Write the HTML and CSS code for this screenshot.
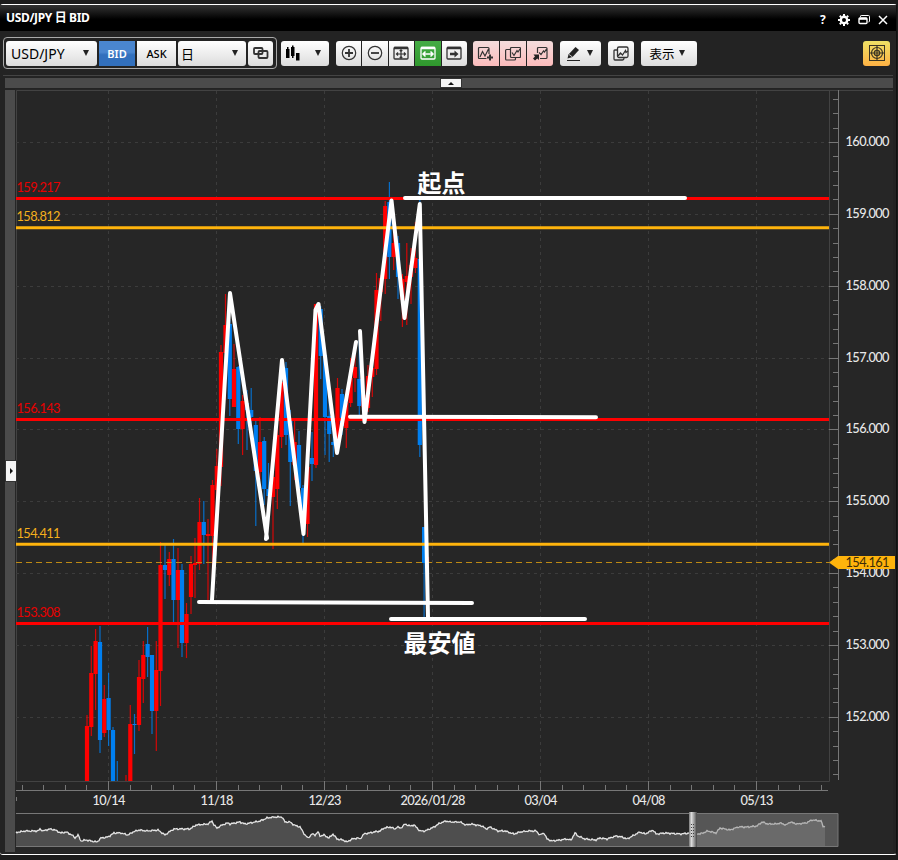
FILE: index.html
```html
<!DOCTYPE html>
<html lang="ja">
<head>
    <meta charset="UTF-8">
    <meta name="viewport" content="width=device-width, initial-scale=1.0">
    <title>USD/JPY 日 BID</title>
    <link rel="stylesheet" href="styles.css">
</head>
<body>
    <div class="window">
        <header class="titlebar">
            <span class="title">USD/JPY 日 BID</span>
            <div class="window-buttons">
                <span class="help">?</span>
                <svg width="12" height="12" viewBox="0 0 12 12"><circle cx="6" cy="6" r="3.2" fill="none" stroke="#fff" stroke-width="2.4"/><path d="M6 0v2M6 10v2M0 6h2M10 6h2M1.8 1.8l1.4 1.4M8.8 8.8l1.4 1.4M1.8 10.2l1.4-1.4M8.8 3.2l1.4-1.4" stroke="#fff" stroke-width="2"/></svg>
                <svg width="12" height="12" viewBox="0 0 12 12" fill="none" stroke="#fff"><path d="M2.5 3V2.2Q2.5 1.5 3.2 1.5H10.5Q11.5 1.5 11.5 2.5V7Q11.5 8 10.5 8"/><rect x="1" y="4" width="8" height="5.5" rx="1" stroke-width="1.4"/><path d="M1 4.8h8" stroke-width="2"/></svg>
                <svg width="10" height="10" viewBox="0 0 10 10"><path d="M1 1l8 8M9 1L1 9" stroke="#fff" stroke-width="1.5"/></svg>
            </div>
        </header>

        <div class="toolbar">
            <div class="symbol-group">
                <button class="btn select symbol">USD/JPY<i class="arrow"></i></button>
                <button class="btn bid">BID</button>
                <button class="btn ask">ASK</button>
                <button class="btn select period">日<i class="arrow"></i></button>
                <button class="btn link"><svg width="16" height="12" viewBox="0 0 16 12" fill="none" stroke="#333" stroke-width="1.8"><rect x="1" y="1" width="8.5" height="6" rx="1"/><rect x="5.5" y="4" width="9" height="7" rx="1"/></svg></button>
            </div>

            <button class="btn chart-type"><svg width="15" height="16" viewBox="0 0 15 16" fill="#000"><path d="M0 4h1V2h1.500v2h1v9H0zM5 2h1V.5h1.500V2h1v9H7.500v2H6V11H5zM10 8h3.500v7.500H10z"/></svg><i class="arrow"></i></button>

            <div class="group zoom-group">
                <button class="btn"><svg width="16" height="16" viewBox="0 0 16 16" fill="none" stroke="#333"><circle cx="8" cy="8" r="6.700" stroke-width="1.2"/><path d="M4 8h8M8 4v8" stroke-width="1.8"/></svg></button>
                <button class="btn"><svg width="16" height="16" viewBox="0 0 16 16" fill="none" stroke="#333"><circle cx="8" cy="8" r="6.700" stroke-width="1.2"/><path d="M4 8h8" stroke-width="1.8"/></svg></button>
                <button class="btn"><svg width="16" height="16" viewBox="0 0 16 16" fill="none" stroke="#333"><rect x="1" y="2.500" width="14" height="11.500" rx="1" stroke-width="1.300"/><path d="M1 3h14" stroke-width="2.500"/><path d="M3.500 9h9M8 5v8M5 7.500L3.500 9 5 10.500M11 7.500L12.500 9 11 10.500M6.700 6L8 4.800 9.300 6M6.700 12L8 13.200 9.300 12" stroke-width="1.200"/></svg></button>
                <button class="btn active"><svg width="16" height="16" viewBox="0 0 16 16" fill="none" stroke="#fff"><rect x="1" y="2.500" width="14" height="11.500" rx="1" stroke-width="1.300"/><path d="M1 3h14" stroke-width="2.500"/><path d="M3 9h10M5.500 6.500L3 9l2.500 2.500M10.500 6.500L13 9l-2.500 2.500" stroke-width="1.500"/></svg></button>
                <button class="btn"><svg width="16" height="16" viewBox="0 0 16 16" fill="none" stroke="#333"><rect x="1" y="2.500" width="14" height="11.500" rx="1" stroke-width="1.300"/><path d="M1 3h14" stroke-width="2.500"/><path d="M4 7.800h4.500V5.500L12.500 9l-4 3.500v-2.300H4z" fill="#333" stroke="none"/></svg></button>
            </div>

            <div class="group pink-group">
                <button class="btn"><svg width="17" height="16" viewBox="0 0 17 16" fill="none" stroke="#333" stroke-width="1.200"><path d="M9.500 13.500H2.500Q1.500 13.500 1.500 12.500V3.500Q1.500 2.500 2.500 2.500H11Q12 2.500 12 3.500V9M3 12L5.500 6.500 8 11 11.500 4"/><path d="M13 9.500v6M10 12.500h6" stroke-width="2"/></svg></button>
                <button class="btn"><svg width="16" height="16" viewBox="0 0 16 16" fill="none" stroke="#333" stroke-width="1.200"><path d="M5 4.500H1.500Q.600 4.500 .600 5.500V14Q.600 15 1.500 15H9.500Q10.500 15 10.500 14V13"/><rect x="5.500" y="2.500" width="10" height="10" rx="1"/><path d="M7 7.500L9 10.500 12 5.500 13 7 15 4"/></svg></button>
                <button class="btn"><svg width="16" height="16" viewBox="0 0 16 16" fill="none" stroke="#333" stroke-width="1.200"><path d="M5.500 8V3.500Q5.500 2.500 6.500 2.500H14Q15 2.500 15 3.500V12.500Q15 13.500 14 13.500H8M7 7.500L9 9.500 11.500 6 12.500 7 14.500 4"/><path d="M1.500 9.500H7V15L5.300 13.500 3 15.500 1 13.500 3 11.500z" fill="#222" stroke="none"/></svg></button>
            </div>

            <button class="btn pencil"><svg width="15" height="15" viewBox="0 0 15 15"><path d="M1.500 12.500L2.500 8.500 9.500 1 13 4 6.500 11z" fill="#222"/><path d="M3 8.500L6.500 11" stroke="#eee" stroke-width=".8"/><path d="M1 14.500h13" stroke="#222"/></svg><i class="arrow"></i></button>
            <button class="btn windows"><svg width="16" height="16" viewBox="0 0 16 16" fill="none" stroke="#333" stroke-width="1.300"><path d="M4 5H1.800Q1 5 1 6V13.800Q1 15 2 15H9.500Q11 15 11 13"/><rect x="4.500" y="2" width="10.500" height="10.500" rx="1.500"/><path d="M5 11L7.500 8 9.500 10 12.500 5.500 13 7.500 15 6"/></svg></button>
            <button class="btn display">表示<i class="arrow"></i></button>

            <button class="btn target"><svg width="16" height="16" viewBox="0 0 16 16" fill="none" stroke="#3a3424"><rect x=".5" y=".5" width="15" height="15"/><circle cx="8" cy="8" r="5.500" stroke-width="1.200"/><circle cx="8" cy="8" r="2.700" stroke-width="1.200"/><path d="M8 1v14M1 8h14" stroke-width="1.200"/></svg></button>
        </div>

        <div class="top-strip"><span class="handle handle-up"></span></div>

        <div class="main">
            <div class="side-strip"><span class="handle handle-right"></span></div>
            <!-- user units are window pixels -->
            <svg class="chart" viewBox="15 89 878 764" width="878" height="764">
                <defs>
                    <clipPath id="plot"><rect x="16" y="91" width="813" height="690"/></clipPath>
                    <linearGradient id="grip"><stop offset="0" stop-color="#777"/><stop offset=".3" stop-color="#ddd"/><stop offset=".65" stop-color="#999"/><stop offset="1" stop-color="#444"/></linearGradient>
                </defs>
                <path class="frame" d="M16.500 781V90.500H893M829.500 91V781.500H16.500"/>
                <g id="grid"></g>
                <g id="axes"></g>
                <g id="candles" clip-path="url(#plot)"></g>

                <g id="levels"></g>
                <path class="current-line" d="M16 562.500H829"/>
                <path class="price-tag" d="M829 562.500L838 556H895V569H838z"/>
                <text class="tag-text" x="845.500" y="566.500" textLength="44">154.161</text>

                <g class="drawing">
                    <path d="M212 600L230 293 267 538M266 539L282 360 303.500 534 315.500 310 318.500 304 337 453 356 342"/>
                    <path d="M360 331L364.500 422 391.500 200.500 404.500 318 419.800 204 428 617"/>
                    <path d="M405 198H685M350 416.800L596 417.200M199 602L472 603M391 619H585"/>
                </g>
                <text class="note" x="417.500" y="192">起点</text>
                <text class="note" x="403.500" y="652">最安値</text>

                <g id="overview"></g>
            </svg>
        </div>
    </div>

    <script src="chart.js"></script>
</body>
</html>
```
FILE: styles.css
```css
* {
    box-sizing: border-box;
}
body {
    margin: 0;
    height: 860px;
    padding-top: 4px;
    background: #1c1c1c;
    overflow: hidden;
    font-family: "Noto Sans", "Noto Sans CJK JP", sans-serif;
}
.window {
    width: 897px;
    height: 851px;
    background: #232323;
    border-top: 1px solid #fff;
    border-bottom: 1px solid #fff;
    border-right: 1px solid #111;
    border-radius: 3px;
    display: flex;
    flex-direction: column;
}
.titlebar {
    height: 26px;
    flex: none;
    display: flex;
    align-items: center;
    justify-content: space-between;
    padding: 0 8px 0 6px;
    background: linear-gradient(#333, #000 55%);
}
.title {
    color: #fff;
    font-size: 12px;
    font-weight: bold;
    letter-spacing: -0.35px;
    white-space: nowrap;
    position: relative;
    top: -1px;
}
.window-buttons {
    display: flex;
    align-items: center;
    gap: 8px;
    padding-top: 3px;
}
.help {
    color: #fff;
    font-size: 12px;
    font-weight: bold;
    line-height: 12px;
    width: 10px;
}
.toolbar {
    height: 44px;
    flex: none;
    display: flex;
    align-items: center;
    padding: 0 6px 0 3px;
}
.symbol-group {
    height: 32px;
    width: 274px;
    display: flex;
    align-items: center;
    gap: 2px;
    padding: 0 2px;
    border: 1px solid #aaa;
    border-radius: 4px;
    margin-right: 4px;
}
.btn {
    height: 25px;
    border: none;
    border-radius: 3px;
    padding: 0;
    flex: none;
    display: flex;
    align-items: center;
    justify-content: center;
    background: linear-gradient(#fff, #dcdcdc);
    color: #000;
    font-family: inherit;
    white-space: nowrap;
}
.arrow {
    border: 3.5px solid transparent;
    border-top: 6px solid #222;
    border-bottom: none;
}
.select {
    justify-content: space-between;
    padding: 0 8px 0 5px;
    font-size: 14px;
    letter-spacing: 0;
}
.symbol {
    width: 91px;
}
.bid {
    width: 36px;
    border-radius: 0;
    background: linear-gradient(#4a86cf 45%, #3270bd 55%);
    color: #fff;
    font-size: 11px;
    font-weight: 600;
}
.ask {
    width: 39px;
    border-radius: 0;
    font-size: 11px;
    font-weight: 500;
}
.period {
    width: 68px;
    padding-left: 3px;
    font-size: 13px;
}
.link {
    width: 25px;
}
.chart-type {
    width: 48px;
    gap: 14px;
    padding-right: 3px;
    margin-right: 7px;
}
.group {
    display: flex;
    gap: 1px;
    margin-right: 7px;
}
.group .btn {
    width: 25.4px;
    border-radius: 0;
}
.group .btn:first-child {
    border-radius: 3px 0 0 3px;
}
.group .btn:last-child {
    border-radius: 0 3px 3px 0;
}
.group .active {
    background: linear-gradient(#45ac45, #2f982d);
}
.zoom-group {
    margin-right: 6px;
}
.pink-group .btn {
    width: 26px;
    background: linear-gradient(#f3dcdc, #fcbcbc);
}
.pencil {
    width: 41px;
    gap: 6px;
    padding-right: 2px;
    margin-right: 7px;
}
.windows {
    width: 26px;
    margin-right: 7px;
}
.display {
    width: 56px;
    gap: 5px;
    padding-right: 3px;
    font-size: 12.5px;
}
.target {
    width: 27px;
    margin-left: auto;
    background: linear-gradient(#eee065, #ffb244);
}
.top-strip {
    flex: none;
    height: 14px;
    margin: 0 3px 0 3px;
    padding: 1px 0 0 6px;
    border-top: 1px solid #444;
    display: flex;
    justify-content: center;
    background: linear-gradient(#4b4b4b, #4b4b4b) 2px 2px / 888px 10px no-repeat;
}
.handle {
    display: flex;
    align-items: center;
    justify-content: center;
    background: #f4f4f4;
    border: 1px solid #333;
}
.handle-up {
    width: 22px;
    height: 10px;
    margin-top: 1px;
}
.handle-up::after {
    content: "";
    border: 3px solid transparent;
    border-bottom-color: #111;
    border-top: none;
}
.main {
    display: flex;
    height: 764px;
}
.side-strip {
    width: 10px;
    height: 762px;
    margin: 1px 0 0 5px;
    background: #4b4b4b;
    display: flex;
    align-items: center;
    position: relative;
    z-index: 1;
}
.handle-right {
    width: 12px;
    height: 22px;
    flex: none;
}
.handle-right::after {
    content: "";
    border: 3px solid transparent;
    border-left-color: #111;
    border-right: none;
}
.chart {
    flex: none;
    display: block;
    background: #262626;
    overflow: visible;
}
.chart text {
    font-family: Lato, sans-serif;
    font-size: 12.8px;
}
.frame {
    fill: none;
    stroke: #424242;
}
.grid-line {
    stroke: #3c3c3c;
    stroke-dasharray: 3 4;
}
.axis {
    fill: none;
    stroke: #777;
}
.chart .axis-text {
    fill: #e8e8e8;
    font-weight: 500;
}
.chart .date-text {
    font-size: 12.8px;
    text-anchor: middle;
}
.up {
    fill: #f00;
}
.down {
    fill: #007ff0;
}
.wick {
    opacity: 0.8;
}
.red-line {
    stroke: #f00;
    stroke-width: 3;
}
.gold-line {
    stroke: #ffb40c;
    stroke-width: 3;
}
.red-text {
    fill: #e60000;
}
.gold-text {
    fill: #f5b01c;
}
.current-line {
    stroke: #bd8a14;
    stroke-dasharray: 6 4;
}
.price-tag {
    fill: #ffb40c;
}
.tag-text {
    fill: #3c2c08;
}
.drawing {
    fill: none;
    stroke: #fff;
    stroke-width: 4;
    stroke-linecap: round;
    stroke-linejoin: round;
}
.chart .note {
    fill: #fff;
    font-family: "Noto Sans CJK JP", sans-serif;
    font-size: 24px;
    font-weight: bold;
}
.ov-area {
    fill: #4e4e4e;
}
.ov-line {
    fill: none;
    stroke: #e4e4e4;
    stroke-width: 1.3;
}
.ov-frame {
    fill: none;
    stroke: #777;
}
.ov-mask {
    fill: #858585;
    fill-opacity: 0.5;
}
```
FILE: chart.js
```js
const $ = id => document.getElementById(id);

// x, high, body top, body bottom, low, r = up / b = down
const candles = [
    [87,715,726,781,781,'r'], [91.3,646,673,727,736,'r'], [95.6,629,641,674,710,'r'], [100,626,642,740,753,'b'],
    [104.3,685,699,733,737,'r'], [108.6,673,698,730,746,'b'], [113,727,730,781,781,'b'], [117.3,761,781,781,781,'b'],
    [126,775,781,781,781,'r'], [130.3,705,724,781,781,'r'], [134.5,714,724,725,754,'b'], [139,660,677,725,731,'r'],
    [143.3,641,655,679,703,'r'], [147.6,627,644,657,677,'b'], [152,655,655,711,734,'b'], [156.3,641,670,711,751,'r'],
    [160.5,542,565,671,706,'r'], [165,545,565,570,599,'b'], [169.3,552,559,575,586,'r'], [173.5,539,559,600,622,'b'],
    [178,548,570,600,648,'r'], [182,564,570,643,657,'b'], [186.5,603,614,643,658,'r'], [191,556,564,597,614,'r'],
    [195,538,563,565,598,'r'], [199.5,498,522,564,570,'r'], [203.8,501,522,535,564,'b'], [208,519,534,536,600,'r'],
    [212.5,480,485,536,580,'r'], [216.8,449,466,490,500,'r'], [221,345,352,467,486,'r'], [225.5,294,325,353,400,'r'],
    [229.8,320,324,399,416,'b'], [234,344,369,407,407,'r'], [238.3,366,367,429,444,'b'], [242.6,395,401,429,455,'r'],
    [247,390,403,410,450,'b'], [251.2,388,410,417,430,'b'], [255.8,421,425,471,526,'b'], [260,417,442,472,480,'r'],
    [264.2,437,441,489,505,'b'], [268.5,463,489,496,510,'b'], [273,470,477,497,549,'r'], [277.3,425,435,489,509,'r'],
    [281.6,370,382,437,448,'r'], [286,362,368,435,445,'b'], [290.3,410,420,462,506,'b'], [294.6,421,442,465,480,'r'],
    [299,431,445,488,500,'b'], [303,485,488,530,543,'b'], [307.5,460,467,524,537,'r'], [312,432,458,464,481,'b'],
    [316,304,304,465,468,'r'], [320.7,306,309,356,379,'b'], [325,350,355,417,455,'b'], [329.2,400,416,434,462,'b'],
    [333.3,420,442,445,457,'b'], [337.5,378,388,446,450,'r'], [342,389,394,426,435,'b'], [346.3,390,403,428,448,'r'],
    [350.6,358,378,403,407,'r'], [355,355,367,378,392,'r'], [359.3,340,379,406,415,'b'], [363.6,385,395,407,415,'r'],
    [368,365,376,408,412,'r'], [372.3,350,368,377,397,'r'], [376.5,273,290,369,375,'r'], [380.8,275,278,292,321,'r'],
    [385.2,201,206,279,294,'r'], [389.4,182,202,257,279,'b'], [393.7,230,243,257,270,'r'], [398,236,243,277,299,'b'],
    [402.4,274,279,300,327,'r'], [406.8,243,276,282,325,'r'], [411,248,265,277,304,'r'], [415.4,222,258,268,273,'r'],
    [419.8,197,259,445,457,'b'], [424.1,527,527,563,621,'b'], [428.5,557,562,563,563,'r']
];

let html = '';
for (const [x, high, top, bottom, low, dir] of candles) {
    const cls = dir === 'r' ? 'up' : 'down';
    html += `<rect class="${cls} wick" x="${x - 0.6}" y="${high}" width="1.2" height="${low - high}"/>`;
    if (bottom > top) {
        html += `<rect class="${cls}" x="${x - 2.1}" y="${top}" width="4.2" height="${bottom - top}"/>`;
    }
}
$('candles').innerHTML = html;

// Price axis
let grid = '';
let axes = '<path class="axis" d="M838.5 90V780M16 790.5H828M16.5 797V801"/>';
for (let i = -3; i <= 44; i++) {
    const y = Math.round(142 + i * 14.37) + 0.5;
    const major = i % 5 === 0;
    axes += `<path class="axis" d="M${major ? 829 : 833} ${y}H838"/>`;
    if (major && i >= 0) {
        grid += `<path class="grid-line" d="M16 ${y}H829"/>`;
        axes += `<text class="axis-text" x="845.5" y="${y + 3.5}" textLength="44">${160 - i / 5}.000</text>`;
    }
}

// Date axis
const dates = ['10/14', '11/18', '12/23', '2026/01/28', '03/04', '04/08', '05/13'];
for (let i = -4; i <= 33; i++) {
    const x = Math.round(108 + i * 21.6) + 0.5;
    const major = i % 5 === 0;
    axes += `<path class="axis" d="M${x} ${major ? 781 : 785}V790"/>`;
    if (major && i >= 0) {
        grid += `<path class="grid-line" d="M${x} 91V781"/>`;
        const label = dates[i / 5];
        axes += `<text class="axis-text date-text" x="${x + 0.5}" y="805" textLength="${label.length > 5 ? 65 : 33}">${label}</text>`;
    }
}
$('grid').innerHTML = grid;
$('axes').innerHTML = axes;

// Horizontal levels: line y, text baseline, value, colour
const levels = [
    [198.5, 192, '159.217', 'red'], [227.7, 221, '158.812', 'gold'], [419.5, 413, '156.143', 'red'],
    [544.2, 538, '154.411', 'gold'], [623.5, 617, '153.308', 'red']
];
$('levels').innerHTML = levels.map(([y, ty, value, color]) =>
    `<path class="${color}-line" d="M16 ${y}H829"/><text class="${color}-text" x="16.5" y="${ty}" textLength="44">${value}</text>`
).join('');

// Overview strip
const history = [
    [16,832.5],[25,831],[38,831],[40,829],[43,831],[50,829],[55,830],[61,833],[66,832],[72,835],[75,838],[78,835],[81,841],[86,840],
    [91,841],[97,842],[101,838],[108,837],[114,833],[121,833],[128,835],[133,832],[139,830],[147,831],[158,830],[165,835],[169,832],
    [174,829],[190,829],[196,825],[208,824],[212,821],[214,825],[217,828],[222,825],[228,823],[230,824],[240,822],[245,824],[250,823],
    [260,821],[267,818],[274,817],[282,817],[285,822],[290,822],[294,825],[300,827],[305,835],[308,838],[312,834],[315,835],[318,832],
    [320,836],[324,835],[329,838],[333,834],[337,839],[343,840],[347,842],[352,839],[358,838],[360,839],[364,834],[374,832],[380,831],
    [384,828],[390,827],[395,829],[397,827],[401,828],[405,824],[410,826],[414,825],[420,831],[425,831],[434,827],[440,823],[446,821],
    [450,822],[460,822],[466,825],[471,824],[482,826],[486,829],[490,827],[498,831],[505,831],[514,834],[520,832],[528,831],[536,831],
    [540,835],[544,833],[547,839],[552,841],[560,840],[566,839],[571,840],[575,833],[578,836],[585,839],[596,840],[600,838],[607,839],
    [616,836],[622,837],[627,839],[636,834],[640,832],[645,834],[653,830],[656,834],[665,833],[680,834],[690,833],[700,834],[708,831],
    [716,833],[720,828],[730,830],[738,827],[748,827],[757,826],[762,822],[768,824],[776,824],[780,823],[786,825],[790,822],[797,824],
    [806,823],[812,820],[821,821],[823,826],[825,827]
];
let line = '';
for (let i = 0; i < history.length - 1; i++) {
    const [x1, y1] = history[i];
    const [x2, y2] = history[i + 1];
    for (let x = x1; x < x2; x++) {
        const wobble = Math.sin(x * 2.3) * 0.5 + Math.sin(x * 1.1) * 0.4;
        line += ` ${x},${(y1 + (y2 - y1) * (x - x1) / (x2 - x1) + wobble).toFixed(1)}`;
    }
}
line += ' 825,827';
$('overview').innerHTML = `
    <polygon class="ov-area" points="16,847${line} 825,847"/>
    <polyline class="ov-line" points="${line}"/>
    <rect class="ov-mask" x="696" y="813" width="142" height="34"/>
    <path class="ov-frame" d="M16 813.5H838V846.500H16"/>
    <rect x="689" y="812" width="8" height="35" fill="url(#grip)"/>
    <path d="M691.500 824V837M693.500 824V837" stroke="#444" stroke-dasharray="1 2"/>`;
```
